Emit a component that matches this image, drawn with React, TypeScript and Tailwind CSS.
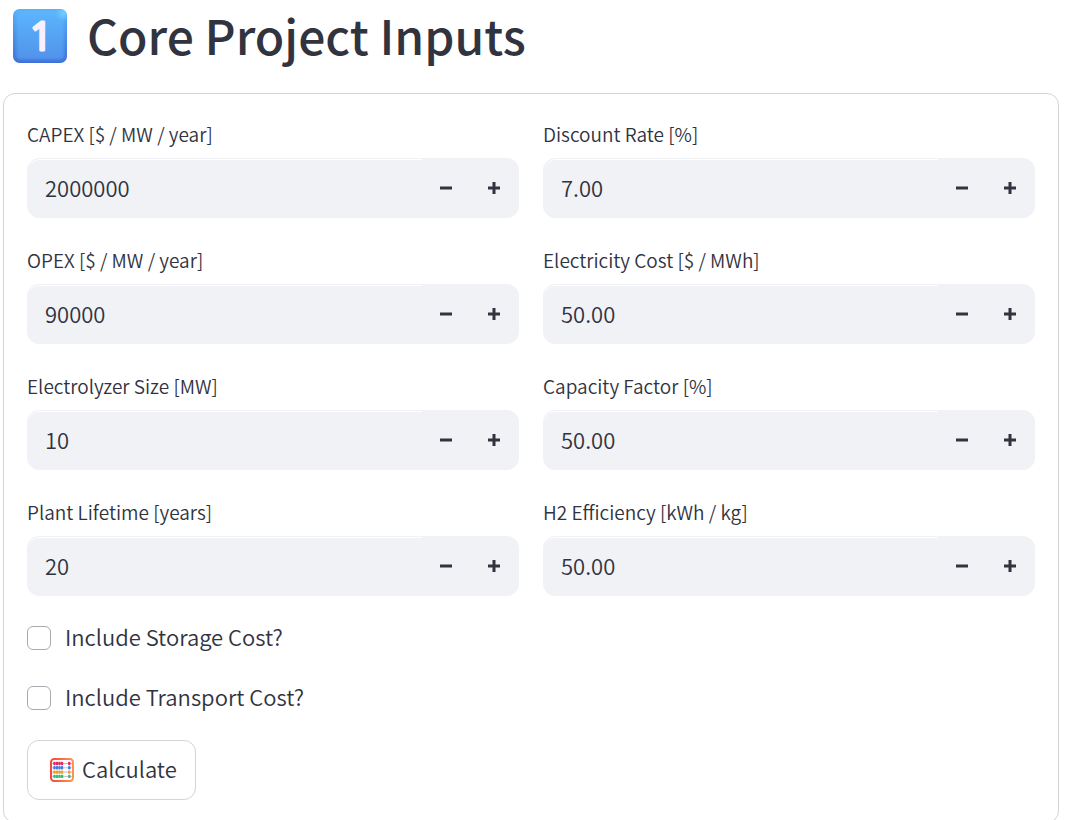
import { useState } from "react";

const leftFields = [
  { id: "capex", label: "CAPEX [$ / MW / year]", value: 2000000, step: 1, digits: 0 },
  { id: "opex", label: "OPEX [$ / MW / year]", value: 90000, step: 1, digits: 0 },
  { id: "size", label: "Electrolyzer Size [MW]", value: 10, step: 1, digits: 0 },
  { id: "lifetime", label: "Plant Lifetime [years]", value: 20, step: 1, digits: 0 },
];

const rightFields = [
  { id: "discount", label: "Discount Rate [%]", value: 7, step: 0.01, digits: 2 },
  { id: "electricity", label: "Electricity Cost [$ / MWh]", value: 50, step: 0.01, digits: 2 },
  { id: "capacity", label: "Capacity Factor [%]", value: 50, step: 0.01, digits: 2 },
  { id: "efficiency", label: "H2 Efficiency [kWh / kg]", value: 50, step: 0.01, digits: 2 },
];

type Field = (typeof leftFields)[number];

function KeycapOne() {
  return (
    <svg viewBox="0 0 54 54" className="size-[54px] shrink-0" role="img" aria-label="Step 1">
      <defs>
        <linearGradient id="keyFace" x1="0" y1="0" x2="0" y2="1">
          <stop offset="0" stopColor="#5cb5fc" />
          <stop offset="1" stopColor="#5093ec" />
        </linearGradient>
        <linearGradient id="keyEdge" x1="0" y1="0" x2="0" y2="1">
          <stop offset="0" stopColor="#58b0f8" />
          <stop offset="0.5" stopColor="#4a8ee8" />
          <stop offset="1" stopColor="#4070d8" />
        </linearGradient>
        <radialGradient id="keyShine" cx="0.94" cy="0.07" r="0.16">
          <stop offset="0" stopColor="#6fd0ff" />
          <stop offset="1" stopColor="#6fd0ff" stopOpacity="0" />
        </radialGradient>
        <filter id="keySoft" x="-10%" y="-10%" width="120%" height="120%">
          <feGaussianBlur stdDeviation="1.6" />
        </filter>
        <clipPath id="keyClip">
          <rect width="54" height="54" rx="6.5" />
        </clipPath>
      </defs>
      <g clipPath="url(#keyClip)">
        <rect width="54" height="54" fill="url(#keyEdge)" />
        <rect x="3.5" y="1" width="47.5" height="49.5" rx="4" fill="url(#keyFace)" filter="url(#keySoft)" />
        <rect width="54" height="54" fill="url(#keyShine)" />
      </g>
      <text
        x="28"
        y="41"
        textAnchor="middle"
        fontFamily="Open Sans, sans-serif"
        fontWeight="400"
        fontSize="38"
        fill="#f9effd"
        stroke="#f9effd"
        strokeWidth="2.8"
        strokeLinejoin="round"
      >
        1
      </text>
    </svg>
  );
}

const beadRows = [
  { y: 5.5, color: "#e8265f" },
  { y: 9.8, color: "#3c7fe0" },
  { y: 14.1, color: "#f59a2c" },
  { y: 18.4, color: "#35c46a" },
];

function Abacus() {
  return (
    <svg viewBox="0 0 24 24" className="size-6 shrink-0" aria-hidden="true">
      <defs>
        <linearGradient id="abacusFrame" x1="0" y1="0" x2="1" y2="0">
          <stop offset="0" stopColor="#f4493c" />
          <stop offset="1" stopColor="#ff9156" />
        </linearGradient>
      </defs>
      <rect x="1" y="1" width="22" height="22" rx="3.2" fill="#fff" stroke="url(#abacusFrame)" strokeWidth="2" />
      {beadRows.map((row) => (
        <g key={row.y} fill={row.color}>
          <path d={`M2 ${row.y}H22`} stroke="#b9a9c9" strokeWidth="0.8" />
          {[4.5, 7, 9.5, 12, 19.3].map((x) => (
            <rect key={x} x={x - 1.2} y={row.y - 1.7} width="2.4" height="3.4" rx="0.9" />
          ))}
        </g>
      ))}
    </svg>
  );
}

function NumberField({ field }: { field: Field }) {
  const [value, setValue] = useState(field.value.toFixed(field.digits));

  const change = (dir: number) =>
    setValue((prev) => (Number(prev) + dir * field.step).toFixed(field.digits));

  return (
    <div>
      <label htmlFor={field.id} className="mb-1.5 block text-[19px] leading-9">
        {field.label}
      </label>
      <div className="flex h-[60px] overflow-hidden rounded-xl border border-[#f0f2f6] bg-[#f0f2f6]">
        <input
          id={field.id}
          type="number"
          step={field.step}
          value={value}
          onChange={(e) => setValue(e.target.value)}
          className="min-w-0 flex-1 appearance-none rounded-l-xl border-t border-white bg-transparent pb-0.5 pl-[17px] text-[22px] outline-none [-moz-appearance:textfield] [&::-webkit-inner-spin-button]:appearance-none"
        />
        <button
          type="button"
          aria-label={`Decrease ${field.label}`}
          onClick={() => change(-1)}
          className="flex w-12 items-center justify-center hover:bg-gray-200"
        >
          <svg viewBox="0 0 12 12" className="size-3" fill="currentColor">
            <path d="M0 4.5h12v3H0z" />
          </svg>
        </button>
        <button
          type="button"
          aria-label={`Increase ${field.label}`}
          onClick={() => change(1)}
          className="flex w-12 items-center justify-center hover:bg-gray-200"
        >
          <svg viewBox="0 0 12 12" className="size-3" fill="currentColor">
            <path d="M0 4.5h4.5V0h3v4.5H12v3H7.5V12h-3V7.5H0z" />
          </svg>
        </button>
      </div>
    </div>
  );
}

function Check({ id, label }: { id: string; label: string }) {
  return (
    <div className="flex h-9 items-center gap-[14px]">
      <input
        id={id}
        type="checkbox"
        className="size-6 appearance-none rounded-md border border-[#a9aab0] bg-white checked:border-[#ff4b4b] checked:bg-[#ff4b4b]"
      />
      <label htmlFor={id} className="pb-1 text-[22px] leading-8">
        {label}
      </label>
    </div>
  );
}

export default function App() {
  return (
    <main className="bg-white pr-1.5 pl-[3px] font-['Noto_Sans_CJK_SC',sans-serif] font-[350] text-[#31333f]">
      {/* Heading */}
      <header className="flex h-[93px] items-start gap-5 pt-[9px] pl-2.5">
        <KeycapOne />
        <h1 className="text-[48px] leading-[50px] font-medium">Core Project Inputs</h1>
      </header>

      {/* Inputs form */}
      <form
        onSubmit={(e) => e.preventDefault()}
        className="flex flex-col gap-6 rounded-xl border border-[#d3d4d8] px-[23px] py-[22px]"
      >
        <div className="grid grid-cols-2 gap-6">
          <div className="flex flex-col gap-6">
            {leftFields.map((field) => (
              <NumberField key={field.id} field={field} />
            ))}
          </div>
          <div className="flex flex-col gap-6">
            {rightFields.map((field) => (
              <NumberField key={field.id} field={field} />
            ))}
          </div>
        </div>

        <Check id="storage" label="Include Storage Cost?" />
        <Check id="transport" label="Include Transport Cost?" />

        <button
          type="submit"
          className="flex h-[60px] items-center gap-2 self-start rounded-xl border border-[#d3d4d8] bg-white pr-[18px] pl-[22px] text-[22px] hover:border-[#ff4b4b]"
        >
          <Abacus />
          <span className="pb-1">Calculate</span>
        </button>
      </form>
    </main>
  );
}
